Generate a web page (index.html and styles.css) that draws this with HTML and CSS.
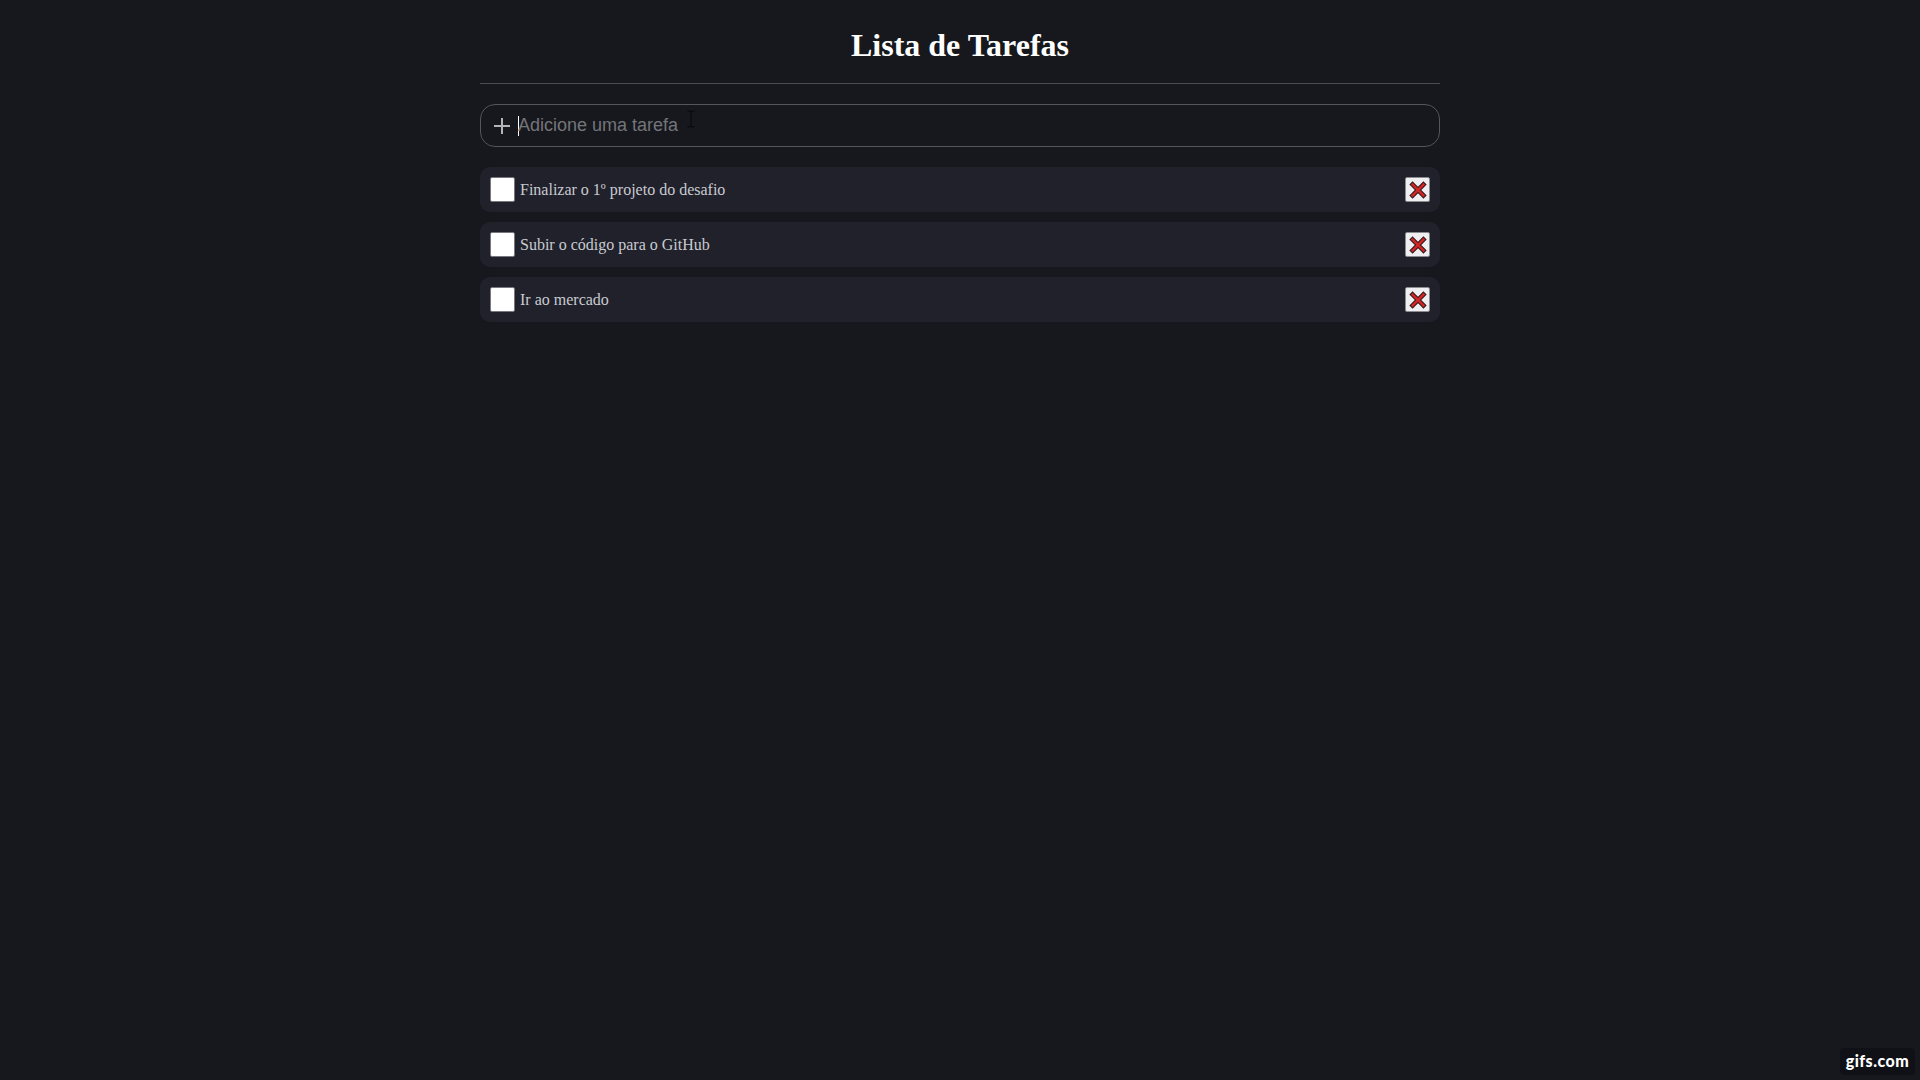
FILE: index.html
```html
<!DOCTYPE html>
<html lang="pt-BR">
<head>
<meta charset="utf-8">
<title>Lista de Tarefas</title>
<link rel="stylesheet" href="styles.css">
</head>
<body>
<svg class="defs" width="0" height="0" aria-hidden="true">
  <symbol id="cross" viewBox="0 0 18 18">
    <path d="M3.6 3.6 14.4 14.4M14.4 3.6 3.6 14.4" stroke="#30181c" stroke-width="4.6" stroke-linecap="square"/>
    <path d="M3.6 3.6 14.4 14.4M14.4 3.6 3.6 14.4" stroke="#d02625" stroke-width="2.6" stroke-linecap="square"/>
  </symbol>
</svg>
<main class="container">
  <h1 class="title">Lista de Tarefas</h1>
  <div class="add-area">
    <svg class="plus" viewBox="0 0 16 16"><path d="M8 0V16M0 8H16"/></svg>
    <div class="field"><span class="caret"></span><span class="placeholder">Adicione uma tarefa</span></div>
    <svg class="cursor" viewBox="0 0 8 18"><path d="M.5 1H3L4 2 5 1H7.5M4 2V16M.5 17H3L4 16 5 17H7.5"/></svg>
  </div>
  <ul class="list">
    <li class="item"><span class="check"></span><span class="label">Finalizar o 1º projeto do desafio</span><button class="remove" aria-label="Remover"><svg class="cross"><use href="#cross"/></svg></button></li>
    <li class="item"><span class="check"></span><span class="label">Subir o código para o GitHub</span><button class="remove" aria-label="Remover"><svg class="cross"><use href="#cross"/></svg></button></li>
    <li class="item"><span class="check"></span><span class="label">Ir ao mercado</span><button class="remove" aria-label="Remover"><svg class="cross"><use href="#cross"/></svg></button></li>
  </ul>
</main>
<div class="badge">gifs.com</div>
</body>
</html>
```
FILE: styles.css
```css
* { box-sizing: border-box; }
body {
  margin: 0;
  min-height: 100vh;
  background: #17181d;
  color: #c9cad1;
  font: 16px "Liberation Serif", "Times New Roman", serif;
}
.defs { position: absolute; }
.container { width: 960px; margin: 0 auto; }
.title {
  height: 84px;
  margin: 0 0 20px;
  padding-top: 27px;
  border-bottom: 1px solid #4c4d51;
  color: #fff;
  font-size: 32px;
  line-height: 37px;
  text-align: center;
}
.add-area {
  position: relative;
  display: flex;
  align-items: center;
  height: 43px;
  padding-left: 13px;
  border: 1px solid #55565a;
  border-radius: 15px;
}
.plus { width: 16px; height: 16px; margin-top: 1px; fill: none; stroke: #b4b5b9; stroke-width: 2; }
.field {
  display: flex;
  align-items: center;
  margin-left: 8px;
  color: #74757a;
  font: 18px/20px "Liberation Sans", Arial, sans-serif;
}
.caret { width: 1px; height: 20px; background: #fff; }
.placeholder { margin-left: -1px; padding-bottom: 2px; }
.cursor {
  position: absolute;
  left: 206px;
  top: 5px;
  width: 8px;
  height: 18px;
  fill: none;
  stroke: #050609;
}
.list {
  display: flex;
  flex-direction: column;
  gap: 10px;
  margin: 20px 0 0;
  padding: 0;
  list-style: none;
}
.item {
  display: flex;
  align-items: center;
  height: 45px;
  padding: 0 10px;
  border-radius: 10px;
  background: #20212a;
}
.check { width: 25px; height: 25px; border: 1px solid #77787d; border-radius: 2px; background: #fff; }
.label { flex: 1; margin-left: 5px; line-height: 18px; }
.remove {
  display: flex;
  align-items: center;
  justify-content: center;
  width: 25px;
  height: 25px;
  padding: 0;
  border: 1px solid #8b8c90;
  border-radius: 2px;
  background: #efeff1;
}
.cross { width: 18px; height: 18px; }
.badge {
  position: fixed;
  right: 5px;
  bottom: 5px;
  width: 75px;
  height: 27px;
  border-radius: 4px;
  background: #101116;
  color: #fff;
  font: 900 16px/26px Lato, sans-serif;
  letter-spacing: 0.5px;
  text-align: center;
}
```
